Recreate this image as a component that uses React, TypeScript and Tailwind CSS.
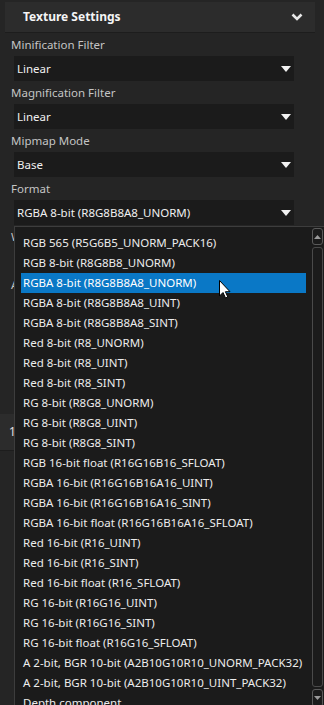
const FORMATS = [
  "RGB 565 (R5G6B5_UNORM_PACK16)",
  "RGB 8-bit (R8G8B8_UNORM)",
  "RGBA 8-bit (R8G8B8A8_UNORM)",
  "RGBA 8-bit (R8G8B8A8_UINT)",
  "RGBA 8-bit (R8G8B8A8_SINT)",
  "Red 8-bit (R8_UNORM)",
  "Red 8-bit (R8_UINT)",
  "Red 8-bit (R8_SINT)",
  "RG 8-bit (R8G8_UNORM)",
  "RG 8-bit (R8G8_UINT)",
  "RG 8-bit (R8G8_SINT)",
  "RGB 16-bit float (R16G16B16_SFLOAT)",
  "RGBA 16-bit (R16G16B16A16_UINT)",
  "RGBA 16-bit (R16G16B16A16_SINT)",
  "RGBA 16-bit float (R16G16B16A16_SFLOAT)",
  "Red 16-bit (R16_UINT)",
  "Red 16-bit (R16_SINT)",
  "Red 16-bit float (R16_SFLOAT)",
  "RG 16-bit (R16G16_UINT)",
  "RG 16-bit (R16G16_SINT)",
  "RG 16-bit float (R16G16_SFLOAT)",
  "A 2-bit, BGR 10-bit (A2B10G10R10_UNORM_PACK32)",
  "A 2-bit, BGR 10-bit (A2B10G10R10_UINT_PACK32)",
  "Depth component",
];

const SELECTED = 2;

function Caret() {
  return (
    <svg width="10" height="6" viewBox="0 0 10 6" className="shrink-0">
      <path d="M0 0 H10 L5 6 Z" fill="#f2f2f2" />
    </svg>
  );
}

function Field({ label, value }: { label: string; value?: string }) {
  return (
    <div className="flex flex-col">
      <div className="h-[23px] flex items-center pl-[6px] text-[11.5px] text-[#c4c4c4]">{label}</div>
      <div className="ml-[9px] w-[280px] h-[25px] bg-[#1b1b1b] flex items-center justify-between pl-[3px] pr-[3px] text-[11.5px] text-[#f0f0f0]">
        <span>{value}</span>
        <Caret />
      </div>
    </div>
  );
}

export default function App() {
  return (
    <div className="relative w-[324px] h-[705px] overflow-hidden bg-[#252525] font-['Segoe_UI','Noto_Sans',sans-serif]">
      <div className="ml-[5px] pt-[2px] w-[310px]">
        {/* Section header */}
        <div className="h-[31px] bg-[#2c2c2c] border-b border-[#1d1d1d] flex items-center justify-between pl-[18px] pr-[12px]">
          <span className="text-[12px] font-bold text-[#f5f5f5]">Texture Settings</span>
          <svg width="12" height="8" viewBox="0 0 12 8">
            <path d="M1.5 1.5 L6 6 L10.5 1.5" stroke="#e8e8e8" strokeWidth="2.6" fill="none" />
          </svg>
        </div>

        <Field label="Minification Filter" value="Linear" />
        <Field label="Magnification Filter" value="Linear" />
        <Field label="Mipmap Mode" value="Base" />
        <Field label="Format" value="RGBA 8-bit (R8G8B8A8_UNORM)" />
        <Field label="Wrap Mode" />
        <Field label="Anisotropy" />

        {/* partially hidden row behind the list */}
        <div className="mt-[93px] -ml-[5px] h-[37px] bg-[#2c2c2c] border-b border-[#1d1d1d] flex items-center pl-[9px] text-[12px] text-[#e0e0e0]">
          1
        </div>
      </div>

      {/* Open dropdown list */}
      <div className="absolute left-[14px] top-[226px] w-[312px] h-[482px] bg-[#1b1b1b] border border-[#3d3d3d]">
        <div className="pt-[6px] pl-[6px] w-[291px]">
          {FORMATS.map((f, i) => (
            <div
              key={f}
              className={`h-[20px] flex items-center pl-[2px] text-[11.5px] whitespace-nowrap ${
                i === SELECTED ? "bg-[#0a78c6] text-white" : "text-[#ececec]"
              }`}
            >
              {f}
            </div>
          ))}
        </div>

        {/* scrollbar */}
        <div className="absolute left-[297px] top-[1px] bottom-0 w-[11px] flex flex-col gap-[2px]">
          <div className="h-[17px] rounded-[3px] border border-[#5a5a5a] flex items-center justify-center">
            <svg width="7" height="4" viewBox="0 0 7 4">
              <path d="M0 4 L3.5 0 L7 4 Z" fill="#9a9a9a" />
            </svg>
          </div>
          <div className="flex-1 rounded-[3px] border border-[#4a4a4a]" />
          <div className="h-[18px] rounded-[3px] border border-[#5a5a5a] flex items-center justify-center">
            <svg width="7" height="4" viewBox="0 0 7 4">
              <path d="M0 0 L7 0 L3.5 4 Z" fill="#9a9a9a" />
            </svg>
          </div>
        </div>
      </div>

      {/* mouse pointer */}
      <svg className="absolute left-[219px] top-[280px]" width="12" height="19" viewBox="0 0 12 19">
        <path d="M0.5 0.5 V16 L4 12.5 L6.5 18 L8.8 17 L6.4 11.7 L11 11.7 Z" fill="#fff" stroke="#000" strokeWidth="1" />
      </svg>
    </div>
  );
}
